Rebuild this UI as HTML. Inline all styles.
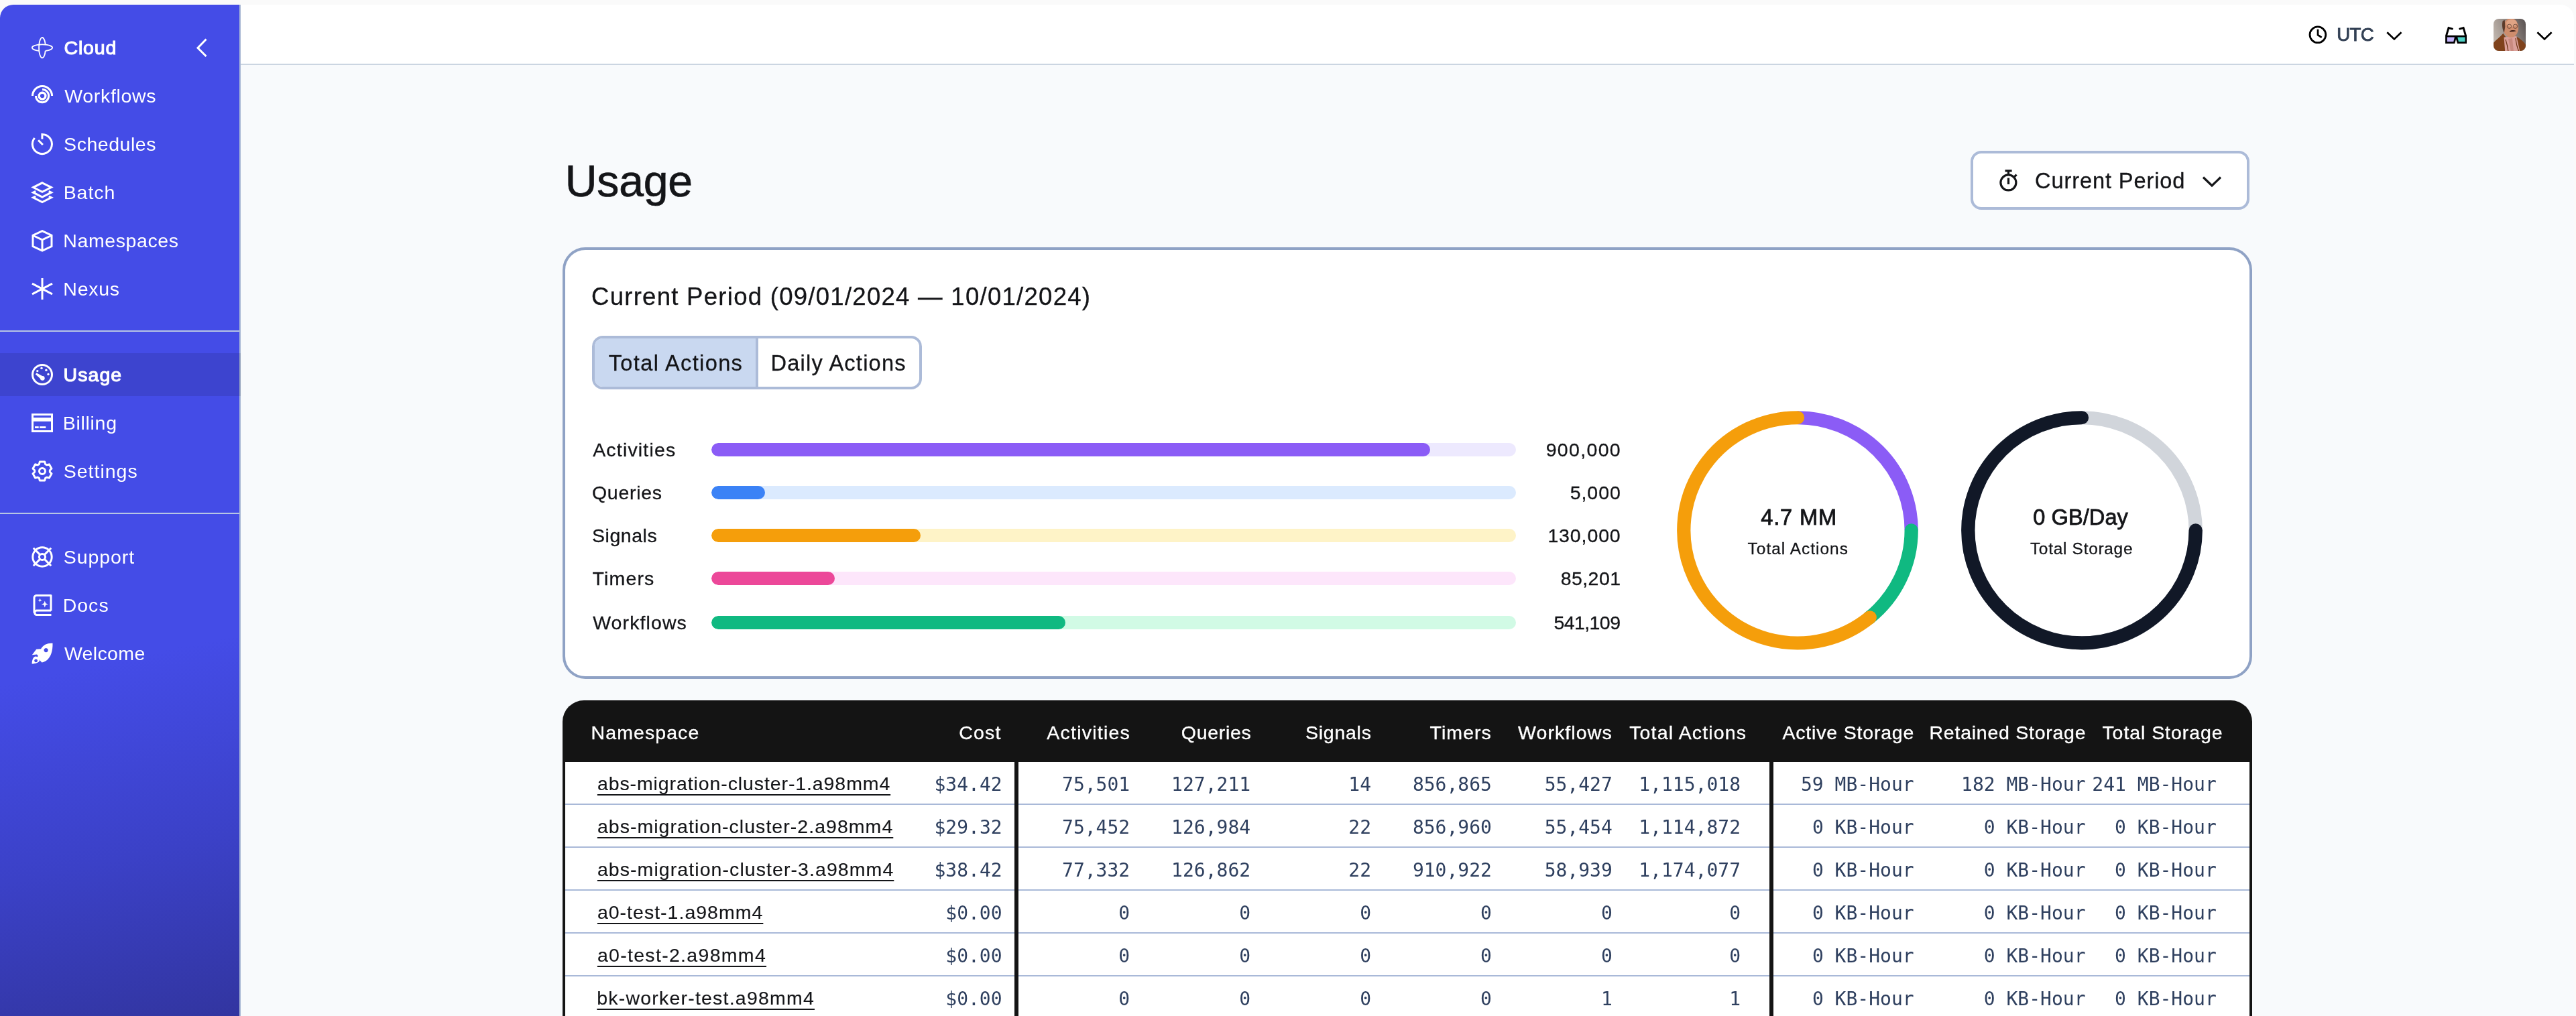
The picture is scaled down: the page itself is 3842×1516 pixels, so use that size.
<!DOCTYPE html>
<html lang="en">
<head>
<meta charset="utf-8">
<title>Usage</title>
<style>
*{box-sizing:border-box;margin:0;padding:0}
html,body{width:3842px;height:1516px;overflow:hidden;background:#fafafa;font-family:"Liberation Sans",sans-serif;color:#141518}
#win{position:absolute;left:0;top:7px;width:3839px;height:1509px;background:#f8fafc;border-radius:20px 20px 0 0;overflow:hidden}
#abs{position:absolute;left:0;top:-7px;width:3842px;height:1516px;will-change:transform}
#side{position:absolute;left:0;top:0;width:359px;height:1516px;border-right:2px solid #a9b8d4;background:linear-gradient(168deg,#444ce7 0,#444ce7 1000px,#3b41c7 1290px,#3235a0 1557px);color:#fff}
.ni{position:absolute;left:47px;width:32px;height:32px;overflow:visible}
.navbg{position:absolute;left:0;width:359px;height:64px;background:rgba(0,0,0,.1)}
.sdiv{position:absolute;left:0;width:357px;height:2px;background:#b7c5e4}
#chev{position:absolute;left:286px;top:53px;width:32px;height:36px}
#top{position:absolute;left:359px;top:7px;width:3480px;height:90px;background:#fff;border-bottom:2px solid #cbd5e1}
#period{position:absolute;left:2939px;top:225px;width:416px;height:88px;border:4px solid #acbbd8;border-radius:16px;background:#fff}
#card{position:absolute;left:839px;top:369px;width:2520px;height:644px;border:4px solid #8fa2c5;border-radius:34px;background:#fff}
#tabs{position:absolute;left:883px;top:501px;width:492px;height:80px;border:4px solid #acbbd8;border-radius:16px;background:#fff;overflow:hidden}
#tabs .a{position:absolute;left:0;top:0;width:244px;height:72px;background:#c9d8f0;border-right:4px solid #acbbd8}
.bt{position:absolute;left:1061px;width:1200px;height:20px;border-radius:10px;overflow:hidden}
.bt i{position:absolute;left:0;top:0;height:20px;border-radius:10px}
.donut{position:absolute;overflow:visible}
#thead{position:absolute;left:839px;top:1045px;width:2520px;height:92px;background:#141414;border-radius:32px 32px 0 0}
#tbody{position:absolute;left:839px;top:1137px;width:2520px;height:400px;background:#fff;border-left:4px solid #141414;border-right:4px solid #141414}
.rl{position:absolute;left:843px;width:2511.5px;height:2px;background:#a9b9d8}
.td{position:absolute;font-family:'DejaVu Sans Mono','Liberation Mono',monospace;font-size:28px;line-height:39px;color:#2f405f;white-space:pre}
a.ns{text-decoration:underline;text-decoration-thickness:2px;text-underline-offset:6px;text-decoration-skip-ink:none}
.vd{position:absolute;top:1137px;width:6px;height:400px;background:#141414}
</style>
</head>
<body>
<div id="win"><div id="abs">
<div id="side">
<svg class="ni" style="top:55px" viewBox="0 0 32 32"><g fill="none" stroke="#fff" stroke-width="1.8"><path d="M20.66 20.86A4.9 15.2 0 1 1 20.66 11.54"/><path d="M20.66 20.86A15.2 4.9 0 1 0 11.34 20.86"/></g></svg><span style="position:absolute;left:95.53px;top:50.00px;font-size:28.5px;line-height:42px;letter-spacing:0.820px;white-space:nowrap;color:#fff;-webkit-text-stroke:1.1px;">Cloud</span>
<svg class="ni" style="top:127px" viewBox="0 0 32 32"><g fill="none" stroke="#fff" stroke-width="3" stroke-width="3.1"><path d="M1.50 16.10A14.55 14.55 0 0 1 30.60 16.10"/><path d="M16.05 6.50A9.6 9.6 0 1 1 6.45 16.10" /><circle cx="16.05" cy="16.1" r="4.85" stroke-width="3.4"/></g></svg><span style="position:absolute;left:96.29px;top:122.00px;font-size:28.5px;line-height:42px;letter-spacing:0.667px;white-space:nowrap;color:#fff;">Workflows</span>
<svg class="ni" style="top:199px" viewBox="0 0 32 32"><g fill="none" stroke="#fff" stroke-width="3" stroke-width="3.1"><path d="M15.9 8.6V1.45A14.55 14.55 0 1 1 4.59 6.84"/><path d="M16.9 17L10.100 10.200"/></g></svg><span style="position:absolute;left:95.12px;top:194.00px;font-size:28.5px;line-height:42px;letter-spacing:0.539px;white-space:nowrap;color:#fff;">Schedules</span>
<svg class="ni" style="top:271px" viewBox="0 0 32 32"><g fill="none" stroke="#fff" stroke-width="3" stroke-linejoin="miter"><path d="M16 1.8L29.5 8.6L16 15.4L2.5 8.6Z"/><path d="M6.2 14.4L2.5 16.2L16 23L29.5 16.2L25.8 14.4"/><path d="M6.2 22L2.5 23.8L16 30.6L29.5 23.8L25.800 22"/></g></svg><span style="position:absolute;left:94.66px;top:266.00px;font-size:28.5px;line-height:42px;letter-spacing:0.947px;white-space:nowrap;color:#fff;">Batch</span>
<svg class="ni" style="top:343px" viewBox="0 0 32 32"><g fill="none" stroke="#fff" stroke-width="3" stroke-linejoin="miter"><path d="M16 1.7L30 8.2V24.6L16 31L2 24.6V8.2Z"/><path d="M2.5 8.5L16 14.8L29.5 8.5M16 14.8V30.5"/></g></svg><span style="position:absolute;left:94.36px;top:338.00px;font-size:28.5px;line-height:42px;letter-spacing:0.593px;white-space:nowrap;color:#fff;">Namespaces</span>
<svg class="ni" style="top:415px" viewBox="0 0 32 32"><g fill="none" stroke="#fff" stroke-width="3"><path d="M16 0V32M1 8.2L31 23.8M1 23.8L31 8.2"/></g></svg><span style="position:absolute;left:94.36px;top:410.00px;font-size:28.5px;line-height:42px;letter-spacing:0.698px;white-space:nowrap;color:#fff;">Nexus</span>
<div class="navbg" style="top:527px"></div>
<svg class="ni" style="top:543px" viewBox="0 0 32 32"><g fill="none" stroke="#fff" stroke-width="3"><circle cx="16" cy="16" r="14.5"/></g><g fill="#fff"><circle cx="8.8" cy="10.6" r="1.7"/><circle cx="15" cy="6.2" r="1.7"/><circle cx="21.9" cy="9.3" r="1.7"/><circle cx="25" cy="15.5" r="1.7"/><circle cx="16.3" cy="21.3" r="3.4"/><path d="M5.8 15.6L7.6 13.6L18.4 19.2L14.8 23.4Z"/></g></svg><span style="position:absolute;left:94.46px;top:538.00px;font-size:28.5px;line-height:42px;letter-spacing:1.096px;white-space:nowrap;color:#fff;-webkit-text-stroke:1.1px;">Usage</span>
<svg class="ni" style="top:615px" viewBox="0 0 32 32"><g fill="none" stroke="#fff" stroke-width="3"><rect x="1.5" y="3.5" width="29" height="25"/></g><g fill="#fff"><rect x="2" y="8.2" width="28" height="5.600"/><rect x="5" y="21.2" width="5.7" height="2.8"/><rect x="12.1" y="21.2" width="9.2" height="2.8"/></g></svg><span style="position:absolute;left:93.66px;top:610.00px;font-size:28.5px;line-height:42px;letter-spacing:0.720px;white-space:nowrap;color:#fff;">Billing</span>
<svg class="ni" style="top:687px" viewBox="0 0 32 32"><g fill="none" stroke="#fff" stroke-width="3" stroke-linejoin="round"><path d="M11.36 5.59L12.37 1.96L19.63 1.96L20.64 5.59L22.70 6.78L26.34 5.84L29.97 12.13L27.34 14.81L27.34 17.19L29.97 19.87L26.34 26.16L22.70 25.22L20.64 26.41L19.63 30.04L12.37 30.04L11.36 26.41L9.30 25.22L5.66 26.16L2.03 19.87L4.66 17.19L4.66 14.81L2.03 12.13L5.66 5.84L9.30 6.78Z"/><circle cx="16" cy="16" r="4.5"/></g></svg><span style="position:absolute;left:94.72px;top:682.00px;font-size:28.5px;line-height:42px;letter-spacing:0.991px;white-space:nowrap;color:#fff;">Settings</span>
<svg class="ni" style="top:815px" viewBox="0 0 32 32"><g fill="none" stroke="#fff" stroke-width="3"><circle cx="16" cy="16" r="14.2"/><circle cx="16" cy="16" r="4.6"/><path d="M2.8 2.8L12.6 12.6M29.2 2.8L19.4 12.6M2.8 29.2L12.6 19.4M29.2 29.2L19.4 19.4"/></g></svg><span style="position:absolute;left:94.72px;top:810.00px;font-size:28.5px;line-height:42px;letter-spacing:0.941px;white-space:nowrap;color:#fff;">Support</span>
<svg class="ni" style="top:887px" viewBox="0 0 32 32"><g fill="none" stroke="#fff" stroke-width="3" stroke-linejoin="round"><path d="M29 24.5V1.5H7.5A3.5 3.5 0 0 0 4 5V27.5"/><path d="M29 24H7.5A3.3 3.3 0 0 0 7.5 30.5H29.5"/></g><g fill="#fff"><path d="M19.8 9.5L21.1 13.2L24.8 14.5L21.1 15.8L19.8 19.5L18.5 15.8L14.8 14.5L18.5 13.2Z"/><path d="M12.6 5.8L13.4 7.8L15.4 8.6L13.4 9.4L12.6 11.4L11.8 9.4L9.8 8.6L11.8 7.8Z"/></g></svg><span style="position:absolute;left:93.66px;top:882.00px;font-size:28.5px;line-height:42px;letter-spacing:1.013px;white-space:nowrap;color:#fff;">Docs</span>
<svg class="ni" style="top:959px" viewBox="0 0 32 32"><g fill="#fff"><path fill-rule="evenodd" d="M31.5 0.8C24 0.2 17.8 3 14 9.2L7.2 9.8L0.8 18.2L8 17.6L9.6 19.2C9.2 20.4 9 21.4 9 22.6L15.4 29.6C18.4 28.8 21.2 27.4 23.6 25.4C28.8 21 31.8 12.6 31.5 0.8ZM21.6 8A3.1 3.1 0 1 0 21.61 8Z"/><path fill-rule="evenodd" d="M6.2 20.4A6.2 6.2 0 0 1 12 26.6C12 29.4 6 31.6 0.6 31.6C0.6 26 2.6 20.4 6.2 20.4ZM6.6 24.4A2.4 2.4 0 1 0 6.61 24.4Z"/></g></svg><span style="position:absolute;left:95.89px;top:954.00px;font-size:28.5px;line-height:42px;letter-spacing:0.354px;white-space:nowrap;color:#fff;">Welcome</span>

<svg id="chev" viewBox="0 0 32 36"><path d="M21.5 5.5L9 18.5L21.5 31" fill="none" stroke="#fff" stroke-width="3"/></svg>
<div class="sdiv" style="top:493px"></div>
<div class="sdiv" style="top:765px"></div>
</div>
<div id="top"></div>
<svg style="position:absolute;left:3440px;top:24px" width="400" height="56" viewBox="3440 24 400 56">
<g fill="none" stroke="#000" stroke-width="2.800"><circle cx="3456.900" cy="51.800" r="11.900"/><path d="M3457 43.800V52.200L3462.700 55.800" stroke-width="2.700"/><path d="M3560.300 48.200L3570.900 58.400L3581.500 48.200" stroke-width="2.800"/><path d="M3784.400 48.200L3795 58.400L3805.600 48.200" stroke-width="2.800"/></g>
<g><path d="M3647.1 52.8H3679V65.05H3665L3663.05 58.6L3661.2 65.05H3647.1Z" fill="#000"/><path d="M3649.8 55.4H3660.9L3659.3 62.3H3649.8Z" fill="#c4b5fd"/><path d="M3665.3 55.4H3676.500V62.3H3666.900Z" fill="#4fd1c5"/><path d="M3648.5 53.500L3652 41.500L3658.500 43.400M3677.600 53.500L3674.100 41.500L3667.600 43.400" fill="none" stroke="#000" stroke-width="2.9"/></g>
</svg>
<span style="position:absolute;left:3485.32px;top:31.00px;font-size:27.6px;line-height:41px;letter-spacing:-0.636px;white-space:nowrap;color:#334155;-webkit-text-stroke:.9px;">UTC</span>
<svg style="position:absolute;left:3719px;top:28px" width="48" height="48" viewBox="0 0 48 48"><defs><clipPath id="av"><rect width="48" height="48" rx="8"/></clipPath><linearGradient id="avg" x1="0" y1="0.600" x2="1" y2="0.200"><stop offset="0" stop-color="#c2b7ae"/><stop offset="0.45" stop-color="#9a908a"/><stop offset="1" stop-color="#5e5655"/></linearGradient><filter id="avb" x="-10%" y="-10%" width="120%" height="120%"><feGaussianBlur stdDeviation="0.55"/></filter></defs>
<g clip-path="url(#av)"><rect width="48" height="48" fill="url(#avg)"/><g filter="url(#avb)"><path d="M-1 37C4 31 10 27 14.500 21.700L20 30L17 49H-1Z" fill="#7f421c"/><path d="M33 26C40 30 46 34 49 41V49H38Z" fill="#7f421c"/><path d="M15.500 27.400L34.300 26L39.400 49H17.300Z" fill="#dba09a"/><path d="M22 30L28 29L30 49H26Z" fill="#c98a80"/><ellipse cx="25.800" cy="13.500" rx="11.300" ry="14.600" fill="#cf8d6d"/><ellipse cx="27" cy="6.500" rx="8" ry="5.500" fill="#e0a485"/><path d="M13.800 3C12.300 8 12.800 15 15.800 21L17.300 12L16.800 2Z" fill="#5b3a2c"/><path d="M24 18.200Q29 15.800 34 18.300Q29 19.800 24 19.600Z" fill="#43241b"/><circle cx="23.500" cy="11.300" r="3.100" fill="none" stroke="#4a3027" stroke-width="0.700"/><circle cx="32.500" cy="11.300" r="3.100" fill="none" stroke="#4a3027" stroke-width="0.700"/><path d="M18 31Q21 40 22 49M33 29Q34 40 38 49" stroke="#6b3415" stroke-width="1.200" fill="none"/></g></g></svg>
<span style="position:absolute;left:842.75px;top:228.00px;font-size:66.2px;line-height:84px;letter-spacing:-0.252px;white-space:nowrap;color:#141518;-webkit-text-stroke:.7px;">Usage</span>
<div id="period"><svg style="position:absolute;left:34.500px;top:22.500px" width="36" height="40" viewBox="0 0 36 40"><g fill="none" stroke="#141518" stroke-width="3.2"><circle cx="17.4" cy="20.4" r="11.5"/><path d="M12.5 2.9H22.6M17.500 3V8.500M17.500 13.4V23M25.6 12.6L29.6 8.700"/></g></svg><svg style="position:absolute;left:338.500px;top:29.500px" width="34" height="24" viewBox="0 0 34 24"><path d="M4 5.5L17 18L30 5.500" fill="none" stroke="#141518" stroke-width="3.2"/></svg></div>
<span style="position:absolute;left:3035.12px;top:246.00px;font-size:32.6px;line-height:47px;letter-spacing:0.878px;white-space:nowrap;color:#141518;-webkit-text-stroke:.3px;">Current Period</span>
<div id="card"></div>
<span style="position:absolute;left:882.02px;top:417.00px;font-size:36.6px;line-height:51px;letter-spacing:1.245px;white-space:nowrap;color:#141518;-webkit-text-stroke:.3px;">Current Period (09/01/2024 — 10/01/2024)</span>
<div id="tabs"><div class="a"></div></div>
<span style="position:absolute;left:907.73px;top:518.00px;font-size:32.6px;line-height:47px;letter-spacing:1.356px;white-space:nowrap;color:#141518;-webkit-text-stroke:.3px;">Total Actions</span><span style="position:absolute;left:1149.38px;top:518.00px;font-size:32.6px;line-height:47px;letter-spacing:1.226px;white-space:nowrap;color:#141518;-webkit-text-stroke:.3px;">Daily Actions</span>
<span style="position:absolute;left:884.19px;top:650.00px;font-size:28.5px;line-height:42px;letter-spacing:1.172px;white-space:nowrap;color:#141518;-webkit-text-stroke:.3px;">Activities</span><span class="bt" style="top:661px;background:#ede9fe"><i style="width:1072px;background:#8b5cf6"></i></span><span style="position:absolute;left:2305.64px;top:650.00px;font-size:28.5px;line-height:42px;letter-spacing:1.344px;white-space:nowrap;color:#141518;-webkit-text-stroke:.3px;">900,000</span>
<span style="position:absolute;left:882.91px;top:714.00px;font-size:28.5px;line-height:42px;letter-spacing:0.731px;white-space:nowrap;color:#141518;-webkit-text-stroke:.3px;">Queries</span><span class="bt" style="top:725px;background:#dbeafe"><i style="width:79.7px;background:#3b82f6"></i></span><span style="position:absolute;left:2341.81px;top:714.00px;font-size:28.5px;line-height:42px;letter-spacing:0.904px;white-space:nowrap;color:#141518;-webkit-text-stroke:.3px;">5,000</span>
<span style="position:absolute;left:882.97px;top:778.00px;font-size:28.5px;line-height:42px;letter-spacing:0.538px;white-space:nowrap;color:#141518;-webkit-text-stroke:.3px;">Signals</span><span class="bt" style="top:789px;background:#fef3c7"><i style="width:312px;background:#f59e0b"></i></span><span style="position:absolute;left:2308.38px;top:778.00px;font-size:28.5px;line-height:42px;letter-spacing:0.887px;white-space:nowrap;color:#141518;-webkit-text-stroke:.3px;">130,000</span>
<span style="position:absolute;left:883.62px;top:842.00px;font-size:28.5px;line-height:42px;letter-spacing:1.148px;white-space:nowrap;color:#141518;-webkit-text-stroke:.3px;">Timers</span><span class="bt" style="top:853px;background:#fde6fb"><i style="width:184px;background:#ec4899"></i></span><span style="position:absolute;left:2327.72px;top:842.00px;font-size:28.5px;line-height:42px;letter-spacing:0.428px;white-space:nowrap;color:#141518;-webkit-text-stroke:.3px;">85,201</span>
<span style="position:absolute;left:884.14px;top:908.00px;font-size:28.5px;line-height:42px;letter-spacing:1.105px;white-space:nowrap;color:#141518;-webkit-text-stroke:.3px;">Workflows</span><span class="bt" style="top:919px;background:#d1fae5"><i style="width:528.4px;background:#10b981"></i></span><span style="position:absolute;left:2317.41px;top:908.00px;font-size:28.5px;line-height:42px;letter-spacing:-0.575px;white-space:nowrap;color:#141518;-webkit-text-stroke:.3px;">541,109</span>

<svg class="donut" style="left:2501.1px;top:612.7px" width="360" height="356.6" preserveAspectRatio="none" viewBox="0 0 360 360"><g fill="none" stroke-width="20.3" stroke-linecap="round">
<path d="M180.00 10.30A169.7 169.7 0 0 1 349.70 180.00" stroke="#8b5cf6" stroke-linecap="butt"/><path d="M349.70 180.00A169.7 169.7 0 0 1 286.80 311.88" stroke="#10b981"/><path d="M287.71 311.13A169.7 169.7 0 1 1 179.97 10.30" stroke="#f59e0b"/></g></svg>
<svg class="donut" style="left:2925.4px;top:612.7px" width="360" height="356.6" preserveAspectRatio="none" viewBox="0 0 360 360"><g fill="none" stroke-width="20.3" stroke-linecap="round">
<circle cx="180" cy="180" r="169.7" stroke="#d1d5db"/><path d="M349.70 180.00A169.7 169.7 0 1 1 179.97 10.30" stroke="#111827"/></g></svg>
<span style="position:absolute;left:2626.18px;top:748.00px;font-size:32.6px;line-height:47px;letter-spacing:0.880px;white-space:nowrap;color:#141518;-webkit-text-stroke:.8px;">4.7 MM</span><span style="position:absolute;left:2606.61px;top:800.00px;font-size:24.4px;line-height:37px;letter-spacing:1.028px;white-space:nowrap;color:#141518;-webkit-text-stroke:.3px;">Total Actions</span><span style="position:absolute;left:3032.23px;top:748.00px;font-size:32.6px;line-height:47px;letter-spacing:0.059px;white-space:nowrap;color:#141518;-webkit-text-stroke:.8px;">0 GB/Day</span><span style="position:absolute;left:3027.91px;top:800.00px;font-size:24.4px;line-height:37px;letter-spacing:0.737px;white-space:nowrap;color:#141518;-webkit-text-stroke:.3px;">Total Storage</span>
<div id="thead"></div>
<div id="tbody"></div>
<span style="position:absolute;left:881.54px;top:1072.00px;font-size:28.5px;line-height:42px;letter-spacing:1.083px;white-space:nowrap;color:#fff;-webkit-text-stroke:.35px;">Namespace</span><span style="position:absolute;left:1430.35px;top:1072.00px;font-size:28.5px;line-height:42px;letter-spacing:1.159px;white-space:nowrap;color:#fff;-webkit-text-stroke:.35px;">Cost</span><span style="position:absolute;left:1561.32px;top:1072.00px;font-size:28.5px;line-height:42px;letter-spacing:1.222px;white-space:nowrap;color:#fff;-webkit-text-stroke:.35px;">Activities</span><span style="position:absolute;left:1761.84px;top:1072.00px;font-size:28.5px;line-height:42px;letter-spacing:0.690px;white-space:nowrap;color:#fff;-webkit-text-stroke:.35px;">Queries</span><span style="position:absolute;left:1946.99px;top:1072.00px;font-size:28.5px;line-height:42px;letter-spacing:0.746px;white-space:nowrap;color:#fff;-webkit-text-stroke:.35px;">Signals</span><span style="position:absolute;left:2132.55px;top:1072.00px;font-size:28.5px;line-height:42px;letter-spacing:1.058px;white-space:nowrap;color:#fff;-webkit-text-stroke:.35px;">Timers</span><span style="position:absolute;left:2264.06px;top:1072.00px;font-size:28.5px;line-height:42px;letter-spacing:1.086px;white-space:nowrap;color:#fff;-webkit-text-stroke:.35px;">Workflows</span><span style="position:absolute;left:2430.15px;top:1072.00px;font-size:28.5px;line-height:42px;letter-spacing:1.159px;white-space:nowrap;color:#fff;-webkit-text-stroke:.35px;">Total Actions</span><span style="position:absolute;left:2658.42px;top:1072.00px;font-size:28.5px;line-height:42px;letter-spacing:0.817px;white-space:nowrap;color:#fff;-webkit-text-stroke:.35px;">Active Storage</span><span style="position:absolute;left:2877.54px;top:1072.00px;font-size:28.5px;line-height:42px;letter-spacing:0.748px;white-space:nowrap;color:#fff;-webkit-text-stroke:.35px;">Retained Storage</span><span style="position:absolute;left:3135.45px;top:1072.00px;font-size:28.5px;line-height:42px;letter-spacing:0.934px;white-space:nowrap;color:#fff;-webkit-text-stroke:.35px;">Total Storage</span>
<div class="rl" style="top:1199px"></div><a class="ns" style="position:absolute;left:890.88px;top:1148.00px;font-size:28.5px;line-height:42px;letter-spacing:0.902px;white-space:nowrap;color:#141518;-webkit-text-stroke:.15px;">abs-migration-cluster-1.a98mm4</a><span class="td" style="left:1393.46px;top:1151.00px">$34.42</span><span class="td" style="left:1584.06px;top:1151.00px">75,501</span><span class="td" style="left:1747.10px;top:1151.00px">127,211</span><span class="td" style="left:2011.29px;top:1151.00px">14</span><span class="td" style="left:2106.90px;top:1151.00px">856,865</span><span class="td" style="left:2303.66px;top:1151.00px">55,427</span><span class="td" style="left:2444.28px;top:1151.00px">1,115,018</span><span class="td" style="left:2686.03px;top:1151.00px">59 MB-Hour</span><span class="td" style="left:2925.07px;top:1151.00px">182 MB-Hour</span><span class="td" style="left:3120.37px;top:1151.00px">241 MB-Hour</span>
<div class="rl" style="top:1263px"></div><a class="ns" style="position:absolute;left:890.88px;top:1212.00px;font-size:28.5px;line-height:42px;letter-spacing:1.039px;white-space:nowrap;color:#141518;-webkit-text-stroke:.15px;">abs-migration-cluster-2.a98mm4</a><span class="td" style="left:1393.46px;top:1215.00px">$29.32</span><span class="td" style="left:1584.06px;top:1215.00px">75,452</span><span class="td" style="left:1747.10px;top:1215.00px">126,984</span><span class="td" style="left:2011.29px;top:1215.00px">22</span><span class="td" style="left:2106.90px;top:1215.00px">856,960</span><span class="td" style="left:2303.66px;top:1215.00px">55,454</span><span class="td" style="left:2444.28px;top:1215.00px">1,114,872</span><span class="td" style="left:2702.88px;top:1215.00px">0 KB-Hour</span><span class="td" style="left:2958.78px;top:1215.00px">0 KB-Hour</span><span class="td" style="left:3154.08px;top:1215.00px">0 KB-Hour</span>
<div class="rl" style="top:1327px"></div><a class="ns" style="position:absolute;left:890.88px;top:1276.00px;font-size:28.5px;line-height:42px;letter-spacing:1.074px;white-space:nowrap;color:#141518;-webkit-text-stroke:.15px;">abs-migration-cluster-3.a98mm4</a><span class="td" style="left:1393.46px;top:1279.00px">$38.42</span><span class="td" style="left:1584.06px;top:1279.00px">77,332</span><span class="td" style="left:1747.10px;top:1279.00px">126,862</span><span class="td" style="left:2011.29px;top:1279.00px">22</span><span class="td" style="left:2106.90px;top:1279.00px">910,922</span><span class="td" style="left:2303.66px;top:1279.00px">58,939</span><span class="td" style="left:2444.28px;top:1279.00px">1,174,077</span><span class="td" style="left:2702.88px;top:1279.00px">0 KB-Hour</span><span class="td" style="left:2958.78px;top:1279.00px">0 KB-Hour</span><span class="td" style="left:3154.08px;top:1279.00px">0 KB-Hour</span>
<div class="rl" style="top:1391px"></div><a class="ns" style="position:absolute;left:890.88px;top:1340.00px;font-size:28.5px;line-height:42px;letter-spacing:1.013px;white-space:nowrap;color:#141518;-webkit-text-stroke:.15px;">a0-test-1.a98mm4</a><span class="td" style="left:1410.31px;top:1343.00px">$0.00</span><span class="td" style="left:1668.34px;top:1343.00px">0</span><span class="td" style="left:1848.24px;top:1343.00px">0</span><span class="td" style="left:2028.14px;top:1343.00px">0</span><span class="td" style="left:2208.04px;top:1343.00px">0</span><span class="td" style="left:2387.94px;top:1343.00px">0</span><span class="td" style="left:2579.14px;top:1343.00px">0</span><span class="td" style="left:2702.88px;top:1343.00px">0 KB-Hour</span><span class="td" style="left:2958.78px;top:1343.00px">0 KB-Hour</span><span class="td" style="left:3154.08px;top:1343.00px">0 KB-Hour</span>
<div class="rl" style="top:1455px"></div><a class="ns" style="position:absolute;left:890.88px;top:1404.00px;font-size:28.5px;line-height:42px;letter-spacing:1.306px;white-space:nowrap;color:#141518;-webkit-text-stroke:.15px;">a0-test-2.a98mm4</a><span class="td" style="left:1410.31px;top:1407.00px">$0.00</span><span class="td" style="left:1668.34px;top:1407.00px">0</span><span class="td" style="left:1848.24px;top:1407.00px">0</span><span class="td" style="left:2028.14px;top:1407.00px">0</span><span class="td" style="left:2208.04px;top:1407.00px">0</span><span class="td" style="left:2387.94px;top:1407.00px">0</span><span class="td" style="left:2579.14px;top:1407.00px">0</span><span class="td" style="left:2702.88px;top:1407.00px">0 KB-Hour</span><span class="td" style="left:2958.78px;top:1407.00px">0 KB-Hour</span><span class="td" style="left:3154.08px;top:1407.00px">0 KB-Hour</span>
<div class="rl" style="top:1519px"></div><a class="ns" style="position:absolute;left:890.25px;top:1468.00px;font-size:28.5px;line-height:42px;letter-spacing:1.208px;white-space:nowrap;color:#141518;-webkit-text-stroke:.15px;">bk-worker-test.a98mm4</a><span class="td" style="left:1410.31px;top:1471.00px">$0.00</span><span class="td" style="left:1668.34px;top:1471.00px">0</span><span class="td" style="left:1848.24px;top:1471.00px">0</span><span class="td" style="left:2028.14px;top:1471.00px">0</span><span class="td" style="left:2208.04px;top:1471.00px">0</span><span class="td" style="left:2387.94px;top:1471.00px">1</span><span class="td" style="left:2579.14px;top:1471.00px">1</span><span class="td" style="left:2702.88px;top:1471.00px">0 KB-Hour</span><span class="td" style="left:2958.78px;top:1471.00px">0 KB-Hour</span><span class="td" style="left:3154.08px;top:1471.00px">0 KB-Hour</span>

<div class="vd" style="left:1513px"></div><div class="vd" style="left:2639px"></div>
</div></div>
</body>
</html>
